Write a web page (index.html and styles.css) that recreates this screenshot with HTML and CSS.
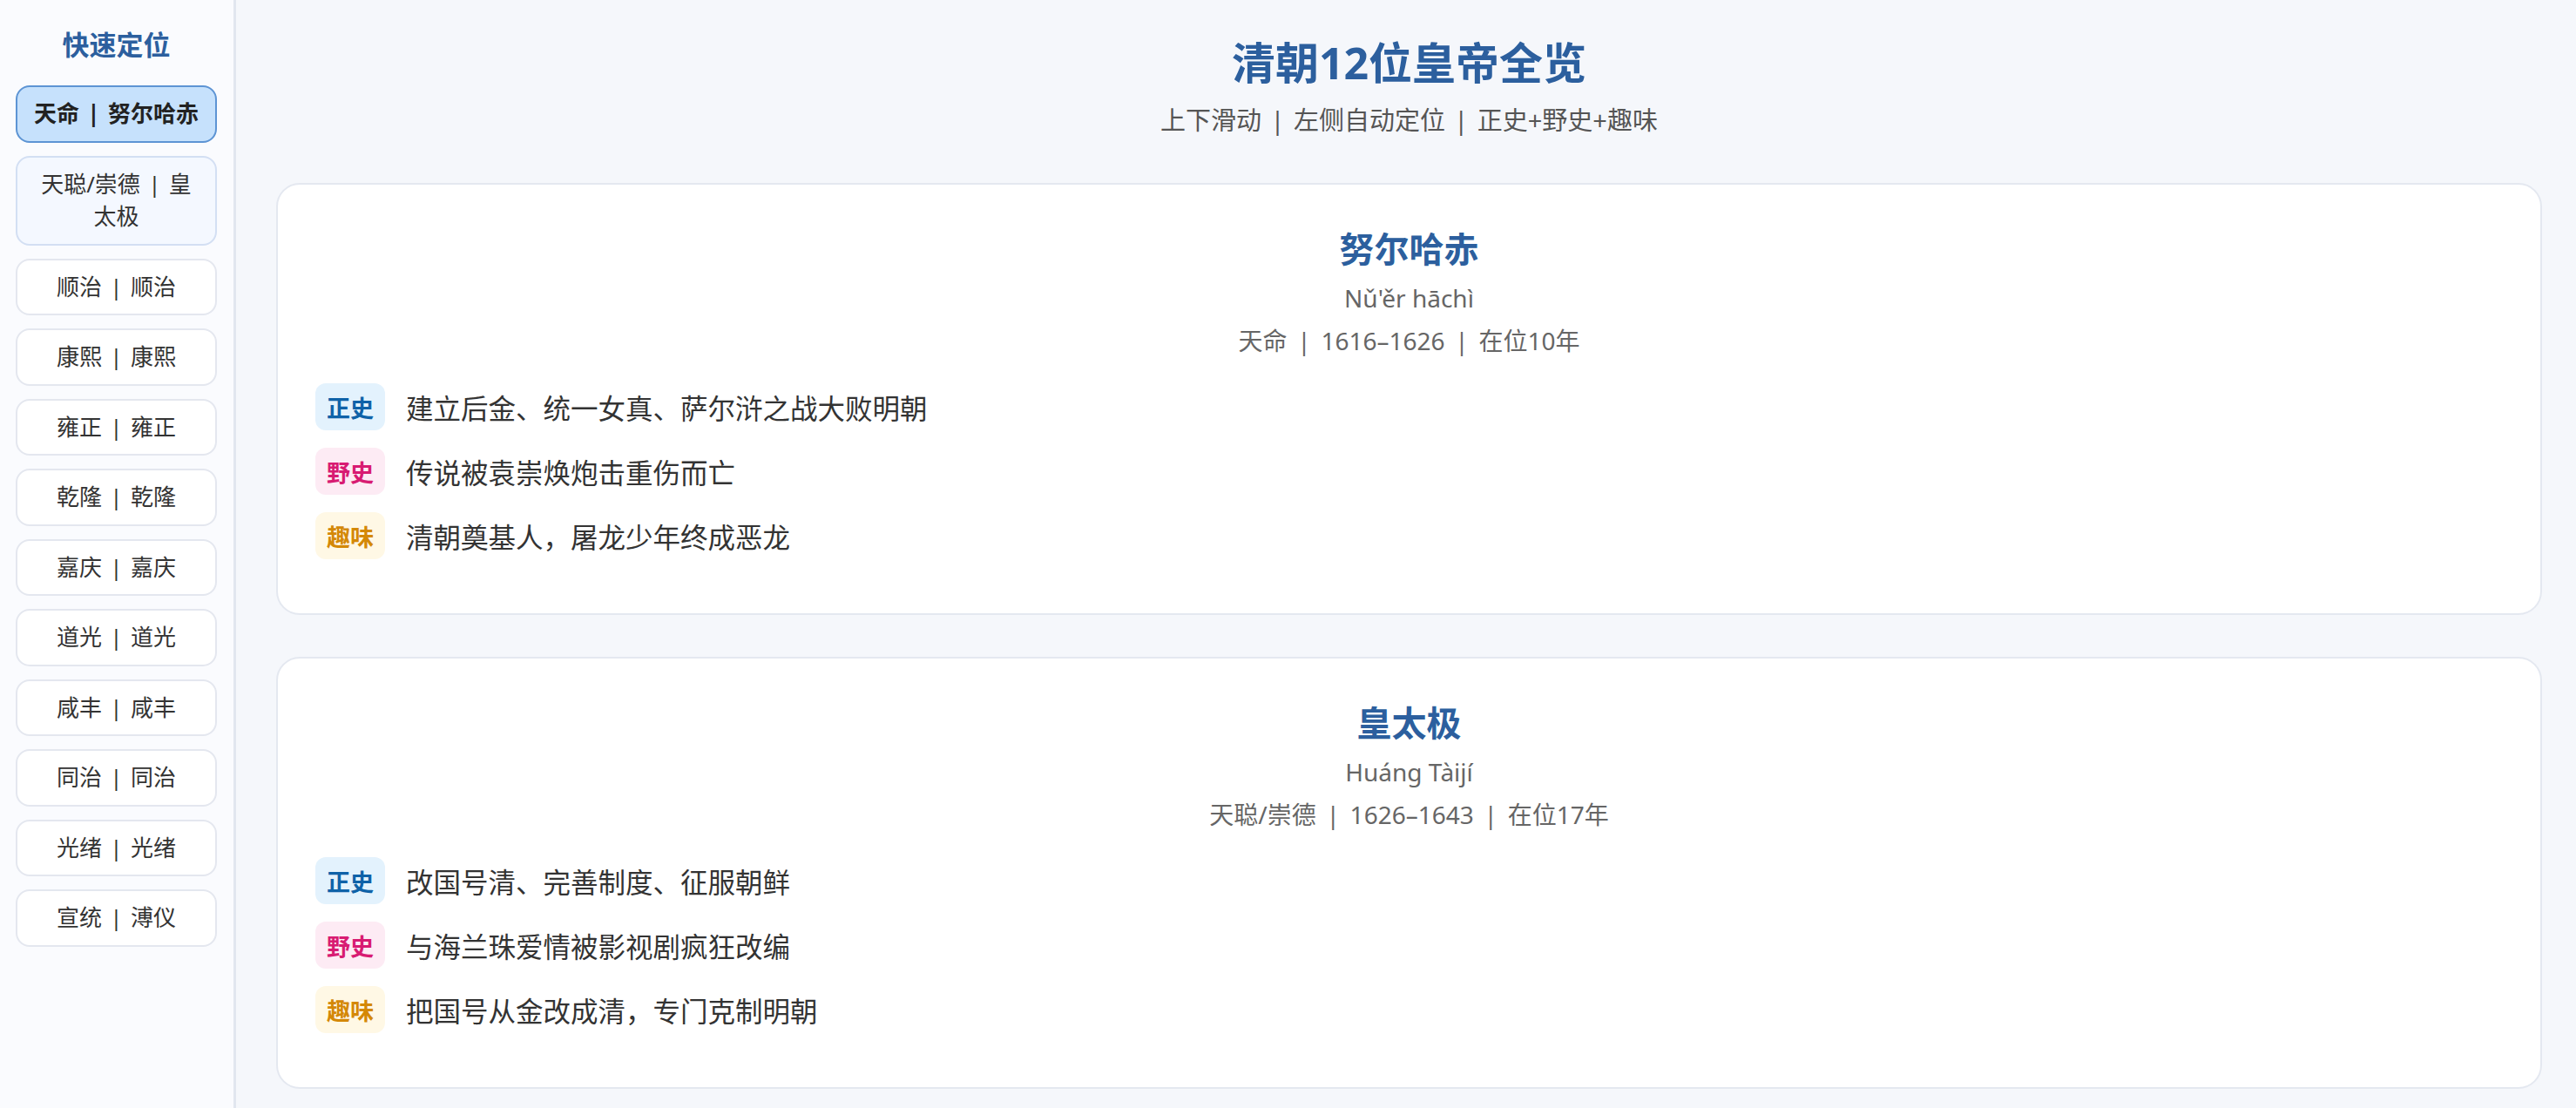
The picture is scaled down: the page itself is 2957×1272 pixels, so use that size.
FILE: index.html
```html
<!DOCTYPE html>
<html lang="zh-CN">

<head>
    <meta charset="UTF-8">
    <meta name="viewport" content="width=device-width, initial-scale=1.0">
    <title>清朝12位皇帝全览</title>
    <link rel="stylesheet" href="styles.css">
</head>

<body>
    <div class="sidebar">
        <div class="side-title">快速定位</div>
        <div class="nav">
            <div class="nav-item active" data-id="e1">天命<span class="sep">|</span>努尔哈赤</div>
            <div class="nav-item near" data-id="e2">天聪/崇德<span class="sep">|</span>皇太极</div>
            <div class="nav-item" data-id="e3">顺治<span class="sep">|</span>顺治</div>
            <div class="nav-item" data-id="e4">康熙<span class="sep">|</span>康熙</div>
            <div class="nav-item" data-id="e5">雍正<span class="sep">|</span>雍正</div>
            <div class="nav-item" data-id="e6">乾隆<span class="sep">|</span>乾隆</div>
            <div class="nav-item" data-id="e7">嘉庆<span class="sep">|</span>嘉庆</div>
            <div class="nav-item" data-id="e8">道光<span class="sep">|</span>道光</div>
            <div class="nav-item" data-id="e9">咸丰<span class="sep">|</span>咸丰</div>
            <div class="nav-item" data-id="e10">同治<span class="sep">|</span>同治</div>
            <div class="nav-item" data-id="e11">光绪<span class="sep">|</span>光绪</div>
            <div class="nav-item" data-id="e12">宣统<span class="sep">|</span>溥仪</div>
        </div>
    </div>

    <div class="main">
        <h1 class="title">清朝12位皇帝全览</h1>
        <div class="subtitle">上下滑动<span class="sep">|</span>左侧自动定位<span class="sep">|</span>正史+野史+趣味</div>

        <div class="list">
            <div class="card" id="e1">
                <div class="name">努尔哈赤</div>
                <div class="pinyin">Nǔ'ěr hāchì</div>
                <div class="meta">天命<span class="sep">|</span>1616–1626<span class="sep">|</span>在位10年</div>
                <div class="rows">
                    <div class="row"><span class="tag zs">正史</span>建立后金、统一女真、萨尔浒之战大败明朝</div>
                    <div class="row"><span class="tag ys">野史</span>传说被袁崇焕炮击重伤而亡</div>
                    <div class="row"><span class="tag qw">趣味</span>清朝奠基人，屠龙少年终成恶龙</div>
                </div>
            </div>

            <div class="card" id="e2">
                <div class="name">皇太极</div>
                <div class="pinyin">Huáng Tàijí</div>
                <div class="meta">天聪/崇德<span class="sep">|</span>1626–1643<span class="sep">|</span>在位17年</div>
                <div class="rows">
                    <div class="row"><span class="tag zs">正史</span>改国号清、完善制度、征服朝鲜</div>
                    <div class="row"><span class="tag ys">野史</span>与海兰珠爱情被影视剧疯狂改编</div>
                    <div class="row"><span class="tag qw">趣味</span>把国号从金改成清，专门克制明朝</div>
                </div>
            </div>
        </div>
    </div>

    <script>
        //点击左侧跳转
        document.querySelector('.nav').onclick = function (event) {
            var item = event.target.closest('.nav-item');
            if (!item) return;
            var card = document.querySelector('#' + item.getAttribute('data-id'));
            if (card) card.scrollIntoView({ behavior: 'smooth' });
            document.querySelectorAll('.nav-item').forEach(function (el) {
                el.classList.remove('active');
            });
            item.classList.add('active');
        }
    </script>
</body>

</html>
```

FILE: styles.css
```css
* {
    box-sizing: border-box;
}

body {
    margin: 0;
    height: 100vh;
    display: flex;
    overflow: hidden;
    background: #f5f7fb;
    color: #333;
    font-family: "Noto Sans", "Noto Sans CJK SC", sans-serif;
}

.sep {
    margin: 0 0.42em;
}

.sidebar {
    width: 271px;
    flex-shrink: 0;
    height: 100vh;
    padding: 29px 19px 0 18px;
    background: #fafbfe;
    border-right: 3px solid #e1e6ef;
}

.side-title {
    font-size: 31px;
    line-height: 44px;
    font-weight: bold;
    text-align: center;
    color: #2c5f9e;
    margin-bottom: 25px;
}

.nav {
    display: flex;
    flex-direction: column;
    gap: 15px;
}

.nav-item {
    padding: 12px 18px;
    font-size: 26px;
    line-height: 37.5px;
    text-align: center;
    color: #333;
    background: #fff;
    border: 2px solid #e4e7ef;
    border-radius: 16px;
    cursor: pointer;
}

.nav-item .sep {
    margin: 0 0.36em;
}

.nav-item.near {
    background: #f4f8ff;
    border-color: #d3dff3;
}

.nav-item.active {
    font-weight: bold;
    color: #222;
    background: #c6e1fc;
    border-color: #5d94d4;
}

.main {
    flex: 1;
    height: 100vh;
    overflow-y: auto;
    padding: 42px 39px 60px 46px;
}

.title {
    margin: 0;
    font-size: 50px;
    line-height: 60px;
    font-weight: bold;
    text-align: center;
    color: #2c5f9e;
}

.subtitle {
    margin-top: 16px;
    font-size: 29px;
    line-height: 40px;
    text-align: center;
    color: #555;
}

.subtitle .sep {
    margin: 0 0.36em;
}

.list {
    margin-top: 52px;
    display: flex;
    flex-direction: column;
    gap: 48px;
}

.card {
    background: #fff;
    border: 2px solid #e4e8f0;
    border-radius: 27px;
    padding: 48px 43px 62px;
}

.name {
    font-size: 40px;
    line-height: 52px;
    font-weight: bold;
    text-align: center;
    color: #2c5f9e;
}

.pinyin {
    margin-top: 10px;
    font-size: 28px;
    line-height: 40px;
    text-align: center;
    color: #666;
}

.meta {
    margin-top: 9px;
    font-size: 28px;
    line-height: 40px;
    text-align: center;
    color: #666;
}

.rows {
    margin-top: 29px;
    display: flex;
    flex-direction: column;
    gap: 20px;
}

.row {
    display: flex;
    align-items: center;
    gap: 24px;
    font-size: 31.5px;
    color: #333;
}

.tag {
    height: 54px;
    padding: 0 13px;
    display: flex;
    align-items: center;
    font-size: 27px;
    font-weight: bold;
    border-radius: 12px;
}

.tag.zs {
    color: #0f62a8;
    background: #e3f2fd;
}

.tag.ys {
    color: #d81b72;
    background: #fdebf4;
}

.tag.qw {
    color: #d48806;
    background: #fff8e5;
}
```
